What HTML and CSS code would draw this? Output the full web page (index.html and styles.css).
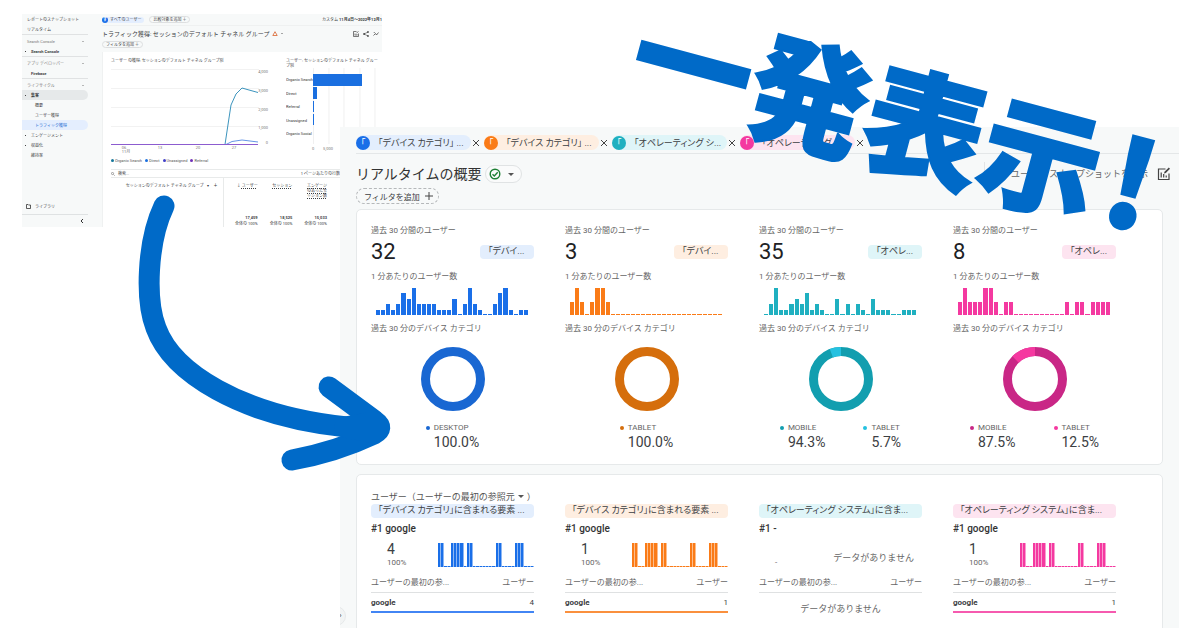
FILE: index.html
```html
<!DOCTYPE html>
<html lang="ja">
<head>
<meta charset="utf-8">
<title>リアルタイムの概要</title>
<link rel="stylesheet" href="styles.css">
</head>
<body>
<main class="canvas">

<section class="report" aria-label="トラフィック獲得">
  <nav class="side">
    <a class="side-item side-first" href="#">レポートのスナップショット</a>
    <a class="side-item side-first" href="#">リアルタイム</a>
    <div class="side-group">
      <button class="side-head">Search Console<i class="up"></i></button>
      <a class="side-item strong has-sub" href="#">Search Console</a>
    </div>
    <div class="side-group">
      <button class="side-head">アプリ デベロッパー<i class="up"></i></button>
      <a class="side-item strong" href="#">Firebase</a>
    </div>
    <div class="side-group">
      <button class="side-head">ライフサイクル<i class="up"></i></button>
      <a class="side-item strong has-sub open" href="#">集客</a>
      <a class="side-item deep" href="#">概要</a>
      <a class="side-item deep" href="#">ユーザー獲得</a>
      <a class="side-item deep current" href="#">トラフィック獲得</a>
      <a class="side-item has-sub" href="#">エンゲージメント</a>
      <a class="side-item has-sub" href="#">収益化</a>
      <a class="side-item" href="#">維持率</a>
    </div>
    <a class="side-item library" href="#"><svg width="5" height="5" viewBox="0 0 10 10"><path d="M1 9V1h3l1 1h4v7z" fill="none" stroke="#333" stroke-width="1.6"/></svg>ライブラリ</a>
    <button class="side-close" aria-label="閉じる"><svg width="4" height="6" viewBox="0 0 4 6"><path d="M3 1 1 3l2 2" fill="none" stroke="#333"/></svg></button>
  </nav>
  <div class="report-main">
    <div class="report-bar">
      <span class="all-users"><b>す</b>すべてのユーザー</span>
      <button class="mini-pill">比較対象を追加 ＋</button>
      <span class="dates">カスタム <b>11月4日～2022年12月1</b></span>
    </div>
    <div class="report-title">
      <h2>トラフィック獲得: セッションのデフォルト チャネル グループ</h2>
      <svg width="6" height="5" viewBox="0 0 6 5"><path d="M3 .7 5.2 4.5H.8z" fill="none" stroke="#d9622b" stroke-width=".8"/></svg>
      <i class="down"></i>
      <span class="report-tools">
        <svg width="6" height="6" viewBox="0 0 12 12"><path d="M7 1H1v10h10V5M4 5v4M6 7v2M8 6v3M7 4l4-3" fill="none" stroke="#444" stroke-width="1.4"/></svg>
        <svg width="6" height="6" viewBox="0 0 12 12"><path d="M10 2 2 6l8 4" fill="none" stroke="#444" stroke-width="1.2"/><circle cx="10" cy="2" r="1.6"/><circle cx="2" cy="6" r="1.6"/><circle cx="10" cy="10" r="1.6"/></svg>
        <svg width="6" height="6" viewBox="0 0 12 12"><path d="m1 9 4-4 2 3 4-5M2 4l1-2" fill="none" stroke="#444" stroke-width="1.5"/></svg>
      </span>
    </div>
    <button class="mini-pill">フィルタを追加 ＋</button>
    <div class="report-card">
      <div class="report-charts">
        <figure class="line-chart">
          <figcaption>ユーザー の獲得: セッションのデフォルト チャネル グループ別</figcaption>
          <svg width="160" height="87" viewBox="112 67 160 87">
            <path d="M112 69.500h148M112 88.500h148M112 107.500h148M112 126.500h148" stroke="#ececec" stroke-width=".7"/>
            <path d="M226 144.500 230 118l2-13 5-11 6-6 7 2 9 2.500" fill="none" stroke="#2688b5" stroke-width=".9"/>
            <path d="m227 144.500 6-3 10-1.500 16 2" fill="none" stroke="#3c78e0" stroke-width=".8"/>
            <path d="M112 144.500h147" stroke="#8c5ccf" stroke-width="1"/>
            <g class="tick" text-anchor="end"><text x="269" y="73">4,000</text><text x="269" y="92">3,000</text><text x="269" y="111">2,000</text><text x="269" y="129">1,000</text><text x="269" y="144">0</text></g>
            <g class="tick" text-anchor="middle"><text x="125" y="149">06</text><text x="127" y="153">11月</text><text x="161" y="149">13</text><text x="199" y="149">20</text><text x="235" y="149">27</text></g>
          </svg>
          <ul class="line-legend"><li class="k1">Organic Search</li><li class="k2">Direct</li><li class="k3">Unassigned</li><li class="k4">Referral</li></ul>
        </figure>
        <figure class="bar-chart">
          <figcaption>ユーザー: セッションのデフォルト チャネル グループ別</figcaption>
          <svg width="96" height="84" viewBox="286 69 96 84">
            <path d="M313.500 69v76M329 69v76M344 69v76M360 69v76M375 69v76" stroke="#eaeaea" stroke-width=".7"/>
            <path d="M313 75h49v12h-49zM313 88h4v12h-4zM313 102h1v11h-1zM313 115h1v11h-1z" fill="#1a6fe0"/>
            <g class="name"><text x="286" y="82">Organic Search</text><text x="286" y="96">Direct</text><text x="286" y="109">Referral</text><text x="286" y="123">Unassigned</text><text x="286" y="136">Organic Social</text></g>
            <g class="tick" text-anchor="middle"><text x="313" y="151">0</text><text x="328" y="151">5,000</text></g>
          </svg>
        </figure>
      </div>
      <div class="report-search"><span><svg width="4" height="4" viewBox="0 0 8 8"><circle cx="3" cy="3" r="2.200" fill="none" stroke="#555"/><path d="m5 5 2.500 2.500" stroke="#555"/></svg> 検索...</span><span>1 ページあたりの行数</span></div>
      <table class="report-table">
        <thead><tr><th class="dim">セッションのデフォルト チャネル グループ　▾　<b>＋</b></th><th>↓ <u>ユーザー</u></th><th><u>セッション</u></th><th><u>エンゲージ<br>のあったセ<br>ッション数</u></th></tr></thead>
        <tbody><tr><td class="dim"></td><td><b>17,459</b><br>全体の 100%</td><td><b>18,525</b><br>全体の 100%</td><td><b>15,033</b><br>全体の 100%</td></tr></tbody>
      </table>
    </div>
  </div>
</section>

<section class="realtime" aria-label="リアルタイムの概要">
  <div class="tabs">
    <div class="tab blue"><span class="tab-body"><i>「</i><span>「デバイス カテゴリ」 ...</span></span><button aria-label="削除"><svg width="10" height="10" viewBox="0 0 10 10"><path d="m2 2 6 6M8 2 2 8"/></svg></button></div>
    <div class="tab orange"><span class="tab-body"><i>「</i><span>「デバイス カテゴリ」 ...</span></span><button aria-label="削除"><svg width="10" height="10" viewBox="0 0 10 10"><path d="m2 2 6 6M8 2 2 8"/></svg></button></div>
    <div class="tab teal"><span class="tab-body"><i>「</i><span>「オペレーティング シ...</span></span><button aria-label="削除"><svg width="10" height="10" viewBox="0 0 10 10"><path d="m2 2 6 6M8 2 2 8"/></svg></button></div>
    <div class="tab pink"><span class="tab-body"><i>「</i><span>「オペレーティング シ...</span></span><button aria-label="削除"><svg width="10" height="10" viewBox="0 0 10 10"><path d="m2 2 6 6M8 2 2 8"/></svg></button></div>
  </div>
  <header class="head">
    <h1>リアルタイムの概要</h1>
    <button class="status" aria-label="ステータス"><svg width="12" height="12" viewBox="0 0 12 12"><circle cx="6" cy="6" r="4.800" fill="none" stroke="#1e8035" stroke-width="1.400"/><path d="m3.500 6.200 1.800 1.700 3.400-3.700" fill="none" stroke="#1e8035" stroke-width="1.400"/></svg><i class="caret"></i></button>
    <a class="snapshot" href="#">ユーザー スナップショットを表示</a>
    <button class="edit" aria-label="編集"><svg width="14" height="14" viewBox="0 0 14 14"><path d="M8.500 2H1.500v10.500H12V6.500" fill="none" stroke="#444" stroke-width="1.200"/><path d="M4.200 5.500v5M6.700 7v3.500M9.200 8.500v2" stroke="#444" stroke-width="1.200"/><path d="m7 6.500.5-1.800L11.800.6l1.200 1.200-4.200 4.200z" fill="#444"/></svg></button>
  </header>
  <button class="filter">フィルタを追加<svg width="10" height="10" viewBox="0 0 10 10"><path d="M5 1v8M1 5h8" stroke="#444"/></svg></button>

  <div class="card">
    <article class="stat blue">
      <p>過去 30 分間のユーザー</p>
      <div class="count"><strong>32</strong><span class="chip">「デバイ...</span></div>
      <p>1 分あたりのユーザー数</p>
      <div class="bars" data-max="5" data-values="112124352222111302521002451011"></div>
      <p>過去 30 分のデバイス カテゴリ</p>
      <svg class="donut" viewBox="0 0 64 64"><circle class="main" cx="32" cy="32" r="27.500"/></svg>
      <dl class="legend"><div><dt>DESKTOP</dt><dd>100.0%</dd></div></dl>
    </article>
    <article class="stat orange">
      <p>過去 30 分間のユーザー</p>
      <div class="count"><strong>3</strong><span class="chip">「デバイ...</span></div>
      <p>1 分あたりのユーザー数</p>
      <div class="bars" data-max="2" data-values="121012210000000000000000000000"></div>
      <p>過去 30 分のデバイス カテゴリ</p>
      <svg class="donut" viewBox="0 0 64 64"><circle class="main" cx="32" cy="32" r="27.500"/></svg>
      <dl class="legend"><div><dt>TABLET</dt><dd>100.0%</dd></div></dl>
    </article>
    <article class="stat teal">
      <p>過去 30 分間のユーザー</p>
      <div class="count"><strong>35</strong><span class="chip">「オペレ...</span></div>
      <p>1 分あたりのユーザー数</p>
      <div class="bars" data-max="5" data-values="025112324121003020210311100111"></div>
      <p>過去 30 分のデバイス カテゴリ</p>
      <svg class="donut" viewBox="0 0 64 64"><circle class="main" cx="32" cy="32" r="27.500"/><circle class="part" cx="32" cy="32" r="27.500" pathLength="100" stroke-dasharray="5.700 94.300" transform="rotate(-110.500 32 32)"/></svg>
      <dl class="legend"><div><dt>MOBILE</dt><dd>94.3%</dd></div><div class="second"><dt>TABLET</dt><dd>5.7%</dd></div></dl>
    </article>
    <article class="stat pink">
      <p>過去 30 分間のユーザー</p>
      <div class="count"><strong>8</strong><span class="chip">「オペレ...</span></div>
      <p>1 分あたりのユーザー数</p>
      <div class="bars" data-max="2" data-values="121112210110000000000101101111"></div>
      <p>過去 30 分のデバイス カテゴリ</p>
      <svg class="donut" viewBox="0 0 64 64"><circle class="main" cx="32" cy="32" r="27.500"/><circle class="part" cx="32" cy="32" r="27.500" pathLength="100" stroke-dasharray="12.500 87.500" transform="rotate(-135 32 32)"/></svg>
      <dl class="legend"><div><dt>MOBILE</dt><dd>87.5%</dd></div><div class="second"><dt>TABLET</dt><dd>12.5%</dd></div></dl>
    </article>
  </div>

  <div class="card sources">
    <h2>ユーザー（ユーザーの最初の参照元<i class="caret"></i>）</h2>
    <article class="source blue">
      <span class="chip">「デバイス カテゴリ」に含まれる要素 ...</span>
      <h3>#1 google</h3>
      <div class="top"><div><strong>4</strong><small>100%</small></div><div class="bars" data-max="1" data-values="110011110110000000110000111000"></div></div>
      <table><thead><tr><th>ユーザーの最初の参...</th><th>ユーザー</th></tr></thead><tbody><tr class="hit"><td>google</td><td>4</td></tr></tbody></table>
    </article>
    <article class="source orange">
      <span class="chip">「デバイス カテゴリ」に含まれる要素 ...</span>
      <h3>#1 google</h3>
      <div class="top"><div><strong>1</strong><small>100%</small></div><div class="bars" data-max="1" data-values="110011110110000000110000111000"></div></div>
      <table><thead><tr><th>ユーザーの最初の参...</th><th>ユーザー</th></tr></thead><tbody><tr class="hit"><td>google</td><td>1</td></tr></tbody></table>
    </article>
    <article class="source teal">
      <span class="chip">「オペレーティング システム」に含ま...</span>
      <h3>#1 -</h3>
      <div class="top"><div><strong>&nbsp;</strong><small>-</small></div><span class="none">データがありません</span></div>
      <table><thead><tr><th>ユーザーの最初の参...</th><th>ユーザー</th></tr></thead><tbody><tr><td class="none" colspan="2">データがありません</td></tr></tbody></table>
    </article>
    <article class="source pink">
      <span class="chip">「オペレーティング システム」に含ま...</span>
      <h3>#1 google</h3>
      <div class="top"><div><strong>1</strong><small>100%</small></div><div class="bars" data-max="1" data-values="110011110110000000110000111000"></div></div>
      <table><thead><tr><th>ユーザーの最初の参...</th><th>ユーザー</th></tr></thead><tbody><tr class="hit"><td>google</td><td>1</td></tr></tbody></table>
    </article>
  </div>
  <button class="expand" aria-label="開く">›</button>
</section>

<svg class="arrow" width="280" height="290" viewBox="120 190 280 290" aria-hidden="true">
  <path d="M164 206C147 242 145 300 156 328C172 372 240 416 347 427L379 428"/>
  <path d="M329 387L375 421Q385 428 374 434Q336 452 292 460"/>
  <path d="M345 427L374 422V433Z"/>
</svg>
<p class="shout">一発表示<span>!</span></p>
</main>
<script src="charts.js"></script>
</body>
</html>
```

FILE: styles.css
```css
* { box-sizing: border-box; }
body { margin: 0; background: #fff; color: #3c4043; font-family: Roboto, "Noto Sans CJK JP", sans-serif; }
h1, h2, h3, p, figure, dl, dd, ul { margin: 0; padding: 0; font-weight: 400; }
button { margin: 0; padding: 0; border: 0; background: none; color: inherit; font: inherit; }
a { color: inherit; text-decoration: none; }
i { font-style: normal; }
svg { display: block; flex: none; }
table { border-collapse: collapse; width: 100%; }
th, td { padding: 0; font-weight: 400; }

.canvas { position: relative; min-height: 644px; overflow: hidden; }

.blue { --c: #1a6fe8; --ring: #1967d2; --tint: #e3eefd; --line: #4285f4; }
.orange { --c: #fa7b17; --ring: #d56e0c; --tint: #feeee1; --line: #fa903e; }
.teal { --c: #1fb0c0; --ring: #129eaf; --tint: #dff5f8; --part: #24c1e0; }
.pink { --c: #f439a0; --ring: #c92786; --tint: #fde4f0; --part: #f538a0; --line: #f65aaf; }

/* Traffic report window */
.report { position: absolute; top: 14px; left: 22px; width: 30%; height: 213px; display: flex; overflow: hidden; background: #f7f9f9; font-size: 4px; line-height: 5px; white-space: nowrap; }
.side { width: 66px; flex: none; display: flex; flex-direction: column; }
.side-item, .side-head { display: flex; align-items: center; height: 10px; flex: none; padding-left: 9px; text-align: left; }
.side-first, .side-head { padding-left: 5px; }
.side-head { width: 100%; color: #777; }
.side-group { border-top: 1px solid #e0e2e3; padding-top: 1px; }
.strong { font-weight: 700; }
.deep { padding-left: 13px; }
.has-sub { gap: 5px; padding-left: 3px; }
.has-sub::before { content: ""; width: 1px; height: 1px; background: #444; }
.open { background: #e6e9ea; border-radius: 0 5px 5px 0; }
.current { background: #e4eefe; color: #1967d2; border-radius: 0 5px 5px 0; }
.up { margin-left: auto; margin-right: 4px; border: 1px solid transparent; border-bottom-color: #777; border-top: 0; }
.library { margin-top: auto; padding-left: 4px; gap: 4px; }
.side-close { display: flex; justify-content: flex-end; align-items: center; height: 13px; padding-right: 4px; border-top: 1px solid #dfe2e3; margin-top: 3px; }
.report-main { flex: 1; min-width: 0; padding-left: 14px; display: flex; flex-direction: column; align-items: flex-start; }
.report-bar { align-self: stretch; display: flex; align-items: center; gap: 5px; height: 12px; border-bottom: 1px solid #eff1f1; }
.all-users { display: flex; align-items: center; gap: 2px; background: #e4eefe; border-radius: 3px; padding-right: 3px; }
.all-users b { width: 6px; height: 6px; border-radius: 50%; background: #1a6fe8; color: #fff; text-align: center; }
.mini-pill { height: 7px; line-height: 5px; padding: 0 3px; border: 1px solid #dddfe0; border-radius: 4px; flex: none; }
.dates { margin-left: auto; }
.report-title { align-self: stretch; display: flex; align-items: center; gap: 3px; height: 15px; padding-right: 3px; }
.report-title h2 { font-size: 6px; }
.down { border: 1px solid transparent; border-top-color: #555; border-bottom: 0; }
.report-tools { margin-left: auto; display: flex; gap: 4px; }
.report-card { align-self: stretch; flex: 1; margin-top: 4px; background: #fff; border-left: 1px solid #eff1f1; padding-left: 8px; display: flex; flex-direction: column; }
.report-charts { display: flex; gap: 15px; padding-top: 6px; height: 117px; }
.line-chart { flex: none; display: flex; flex-direction: column; gap: 4px; }
.bar-chart { flex: none; width: 96px; white-space: normal; display: flex; flex-direction: column; }
.bar-chart figcaption { padding-right: 4px; }
.line-legend { display: flex; gap: 3px; list-style: none; }
.line-legend li::before { content: ""; display: inline-block; width: 3px; height: 3px; border-radius: 50%; margin-right: 1px; background: currentColor; }
.line-legend li { color: #555; font-size: 4px; }
.line-legend .k1::before { background: #16779b; }
.line-legend .k2::before { background: #1a6fe0; }
.line-legend .k3::before { background: #4040c8; }
.line-legend .k4::before { background: #7131b8; }
.tick { fill: #777; font-size: 4px; }
.name { fill: #333; font-size: 4px; }
.report-search { display: flex; justify-content: space-between; align-items: center; height: 9px; border-top: 1px solid #e8eaea; border-bottom: 1px solid #e8eaea; padding-right: 42px; }
.report-search span { display: flex; align-items: center; gap: 3px; }
.report-table { flex: 1; table-layout: fixed; width: 216px; text-align: right; }
.report-table th { vertical-align: top; padding-top: 5px; line-height: 5px; }
.report-table td { vertical-align: bottom; line-height: 6px; }
.report-table .dim { width: 112px; border-right: 1px solid #e8eaea; padding-right: 5px; }
.report-table u { text-decoration: underline dotted; }

/* Realtime window */
.realtime { position: absolute; top: 127px; left: 340px; right: 21px; height: 501px; overflow: hidden; background: #f7f9f9; padding: 0 16px; white-space: nowrap; }
.tabs { display: flex; margin-right: -16px; padding-top: 8px; height: 27px; border-bottom: 1px solid #e4e7e8; font-size: 9px; font-feature-settings: "palt"; }
.tab { display: flex; width: 128px; height: 15px; align-items: center; }
.tab-body { display: flex; align-items: center; gap: 8px; width: 115px; height: 15px; border-radius: 8px; background: var(--tint); }
.tab i { width: 14px; height: 14px; border-radius: 50%; background: var(--c); color: #fff; text-align: center; line-height: 14px; }
.tab path { stroke: #444; fill: none; }
.head { display: flex; align-items: center; height: 40px; margin-right: -8px; }
.head h1 { font-size: 14px; line-height: 20px; color: #333; }
.status { display: flex; align-items: center; gap: 7px; height: 18px; margin-left: 3px; padding: 0 7px 0 3px; border: 1px solid #e0e3e4; border-radius: 9px; background: #fafbfb; }
.caret { display: inline-block; border: 3px solid transparent; border-top-color: #555; border-bottom: 0; }
.snapshot { margin-left: auto; padding-left: 26px; border-left: 1px solid #e3e5e6; font-size: 9px; line-height: 24px; color: #666; }
.edit { margin-left: 9px; }
.filter { display: flex; align-items: center; gap: 4px; height: 16px; margin-top: -6px; padding: 0 4px 0 7px; border: 1px dashed #b5b8ba; border-radius: 8px; font-size: 8px; }
.card { display: grid; grid-template-columns: repeat(4, 1fr); column-gap: 31px; height: 256px; margin-top: 5px; padding: 13px 46px 0 14px; background: #fff; border: 1px solid #e6e9ea; border-radius: 5px; }
.stat, .source { min-width: 0; }
.stat p { font-size: 8px; line-height: 16px; color: #666; }
.count { display: flex; justify-content: space-between; align-items: center; height: 26px; }
.count strong { font-size: 22px; line-height: 26px; font-weight: 400; color: #202124; }
.chip { display: block; background: var(--tint); border-radius: 4px; height: 14px; line-height: 13px; font-size: 9px; font-feature-settings: "palt"; padding: 0 7px; overflow: hidden; }
.count .chip { width: 54px; padding-left: 8px; }
.count + p { margin-top: 4px; }
.bars { display: grid; grid-template-columns: repeat(30, 1fr); align-items: end; height: 27px; }
.stat .bars { margin: 3px 5px 6px; }
.bars i { display: block; min-height: 1px; background: var(--c); border-right: 1px solid #fff; }
.donut { width: 64px; height: 64px; margin: 10px auto 11px; fill: none; stroke-width: 9; }
.main { stroke: var(--ring); }
.part { stroke: var(--part); }
.legend { display: flex; justify-content: center; gap: 38px; }
.legend dt { display: flex; align-items: center; gap: 4px; font-size: 8px; line-height: 12px; color: #666; }
.legend dt::before { content: ""; width: 4px; height: 4px; border-radius: 50%; background: var(--ring); }
.legend .second dt::before { background: var(--part); }
.legend dd { padding-left: 8px; font-size: 14px; line-height: 17px; color: #3c4043; }

.sources { margin-top: 9px; padding-top: 15px; align-content: start; }
.sources h2 { grid-column: 1 / -1; font-size: 9px; line-height: 14px; color: #555; }
.sources h2 .caret { margin: 0 3px 2px; }
.source h3 { font-size: 10px; line-height: 22px; font-weight: 500; color: #333; }
.top { display: flex; justify-content: space-between; align-items: center; padding-left: 16px; height: 30px; }
.top strong, .top small { display: block; }
.top strong { font-size: 14px; line-height: 16px; font-weight: 400; }
.top small { font-size: 8px; line-height: 12px; color: #666; }
.top .bars { width: 96px; height: 24px; }
.source .bars i { border-right-color: color-mix(in srgb, var(--c), #fff 50%); }
.none { font-size: 9px; color: #666; }
.top .none { padding-right: 8px; padding-top: 4px; }
.source th { text-align: left; font-size: 8px; line-height: 19px; color: #666; border-bottom: 1px solid #dfe1e2; padding-top: 3px; }
.source th:last-child, .source td:last-child { text-align: right; }
.source td { font-size: 8px; line-height: 17px; }
.source .hit td { border-bottom: 2px solid var(--line); padding-top: 1px; }
.source td:first-child { font-weight: 700; }
.source td.none { font-size: 9px; line-height: 32px; font-weight: 400; text-align: center; }
.expand { position: absolute; left: -14px; bottom: 2px; width: 20px; height: 20px; padding-left: 9px; border: 1px solid #e6e9ea; border-radius: 50%; background: #f2f4f4; font-size: 8px; line-height: 16px; }

/* Annotations over both windows */
.arrow { position: absolute; left: 120px; top: 190px; fill: none; stroke: #006ac8; stroke-width: 21; stroke-linecap: round; stroke-linejoin: round; }
.shout { position: absolute; left: 637px; top: -16px; font: 900 120px/120px "Noto Sans CJK JP", sans-serif; color: #006ac8; -webkit-text-stroke: 2px #006ac8; white-space: nowrap; transform: rotate(15deg); transform-origin: left center; }
.shout span { margin-left: 10px; }
```

FILE: charts.js
```js
// Fills each .bars element with one bar per minute.
document.querySelectorAll('.bars').forEach(function (chart) {
  var max = Number(chart.dataset.max);
  chart.dataset.values.split('').forEach(function (value) {
    var bar = document.createElement('i');
    bar.style.height = (Number(value) / max) * 100 + '%';
    chart.appendChild(bar);
  });
});
```
